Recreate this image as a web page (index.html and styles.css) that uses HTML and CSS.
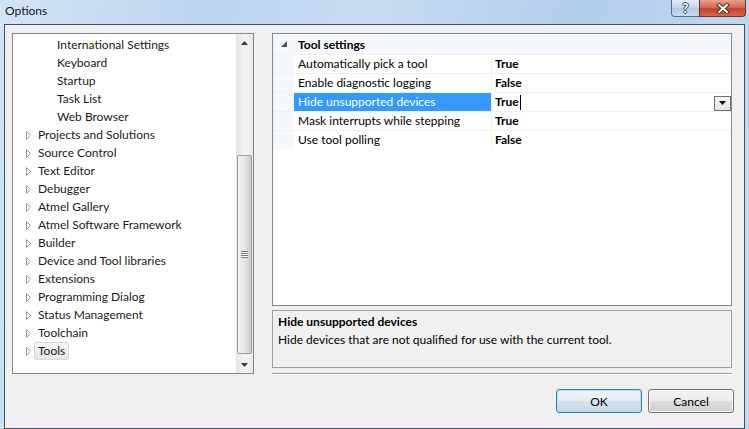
FILE: index.html
```html
<!DOCTYPE html>
<html lang="en">
<head>
    <meta charset="UTF-8" />
    <meta name="viewport" content="width=device-width, initial-scale=1" />
    <title>Options</title>
    <link rel="stylesheet" href="styles.css">
</head>
<body>
    <div class="window">
        <div class="titlebar">
            <span class="title">Options</span>
            <div class="caption-buttons">
                <span class="cap-btn help">?</span>
                <span class="cap-btn close">
                    <svg width="14" height="11" viewBox="0 0 14 11">
                        <path d="M3 2 L11 9 M11 2 L3 9" stroke="#4a2a24" stroke-width="4" stroke-linecap="square" />
                        <path d="M3 2 L11 9 M11 2 L3 9" stroke="#fff" stroke-width="2" stroke-linecap="square" />
                    </svg>
                </span>
            </div>
        </div>

        <div class="client">
            <div class="panes">
                <div class="tree">
                    <ul class="tree-list">
                        <li class="child"><span class="label">International Settings</span></li>
                        <li class="child"><span class="label">Keyboard</span></li>
                        <li class="child"><span class="label">Startup</span></li>
                        <li class="child"><span class="label">Task List</span></li>
                        <li class="child"><span class="label">Web Browser</span></li>
                        <li class="node"><svg class="expander" width="7" height="9" viewBox="0 0 7 9"><path d="M1.5 0.5 L5.5 4.5 L1.5 8.5 Z" /></svg><span class="label">Projects and Solutions</span></li>
                        <li class="node"><svg class="expander" width="7" height="9" viewBox="0 0 7 9"><path d="M1.5 0.5 L5.5 4.5 L1.5 8.5 Z" /></svg><span class="label">Source Control</span></li>
                        <li class="node"><svg class="expander" width="7" height="9" viewBox="0 0 7 9"><path d="M1.5 0.5 L5.5 4.5 L1.5 8.5 Z" /></svg><span class="label">Text Editor</span></li>
                        <li class="node"><svg class="expander" width="7" height="9" viewBox="0 0 7 9"><path d="M1.5 0.5 L5.5 4.5 L1.5 8.5 Z" /></svg><span class="label">Debugger</span></li>
                        <li class="node"><svg class="expander" width="7" height="9" viewBox="0 0 7 9"><path d="M1.5 0.5 L5.5 4.5 L1.5 8.5 Z" /></svg><span class="label">Atmel Gallery</span></li>
                        <li class="node"><svg class="expander" width="7" height="9" viewBox="0 0 7 9"><path d="M1.5 0.5 L5.5 4.5 L1.5 8.5 Z" /></svg><span class="label">Atmel Software Framework</span></li>
                        <li class="node"><svg class="expander" width="7" height="9" viewBox="0 0 7 9"><path d="M1.5 0.5 L5.5 4.5 L1.5 8.5 Z" /></svg><span class="label">Builder</span></li>
                        <li class="node"><svg class="expander" width="7" height="9" viewBox="0 0 7 9"><path d="M1.5 0.5 L5.5 4.5 L1.5 8.5 Z" /></svg><span class="label">Device and Tool libraries</span></li>
                        <li class="node"><svg class="expander" width="7" height="9" viewBox="0 0 7 9"><path d="M1.5 0.5 L5.5 4.5 L1.5 8.5 Z" /></svg><span class="label">Extensions</span></li>
                        <li class="node"><svg class="expander" width="7" height="9" viewBox="0 0 7 9"><path d="M1.5 0.5 L5.5 4.5 L1.5 8.5 Z" /></svg><span class="label">Programming Dialog</span></li>
                        <li class="node"><svg class="expander" width="7" height="9" viewBox="0 0 7 9"><path d="M1.5 0.5 L5.5 4.5 L1.5 8.5 Z" /></svg><span class="label">Status Management</span></li>
                        <li class="node"><svg class="expander" width="7" height="9" viewBox="0 0 7 9"><path d="M1.5 0.5 L5.5 4.5 L1.5 8.5 Z" /></svg><span class="label">Toolchain</span></li>
                        <li class="node"><svg class="expander" width="7" height="9" viewBox="0 0 7 9"><path d="M1.5 0.5 L5.5 4.5 L1.5 8.5 Z" /></svg><span class="label selected">Tools</span></li>
                    </ul>
                    <div class="scrollbar">
                        <div class="sb-arrow">
                            <svg width="7" height="4" viewBox="0 0 7 4"><path d="M3.5 0 L7 4 L0 4 Z" fill="#3a3a3a" /></svg>
                        </div>
                        <div class="sb-track">
                            <div class="sb-thumb"><span class="grip"></span></div>
                        </div>
                        <div class="sb-arrow">
                            <svg width="7" height="4" viewBox="0 0 7 4"><path d="M0 0 L7 0 L3.5 4 Z" fill="#3a3a3a" /></svg>
                        </div>
                    </div>
                </div>

                <div class="right">
                    <div class="propgrid">
                        <div class="category">
                            <span class="cat-glyph">
                                <svg width="6" height="6" viewBox="0 0 6 6"><path d="M6 0 L6 6 L0 6 Z" fill="#505050" /></svg>
                            </span>
                            <span class="cat-name">Tool settings</span>
                        </div>
                        <div class="prop">
                            <span class="prop-margin"></span>
                            <span class="prop-name">Automatically pick a tool</span>
                            <span class="prop-value">True</span>
                        </div>
                        <div class="prop">
                            <span class="prop-margin"></span>
                            <span class="prop-name">Enable diagnostic logging</span>
                            <span class="prop-value">False</span>
                        </div>
                        <div class="prop active">
                            <span class="prop-margin"></span>
                            <span class="prop-name">Hide unsupported devices</span>
                            <span class="prop-value">True<span class="caret"></span>
                                <span class="drop-btn">
                                    <svg width="7" height="4" viewBox="0 0 7 4"><path d="M0 0 L7 0 L3.5 4 Z" fill="#000" /></svg>
                                </span>
                            </span>
                        </div>
                        <div class="prop">
                            <span class="prop-margin"></span>
                            <span class="prop-name">Mask interrupts while stepping</span>
                            <span class="prop-value">True</span>
                        </div>
                        <div class="prop">
                            <span class="prop-margin"></span>
                            <span class="prop-name">Use tool polling</span>
                            <span class="prop-value">False</span>
                        </div>
                    </div>
                    <div class="description">
                        <div class="desc-title">Hide unsupported devices</div>
                        <div class="desc-text">Hide devices that are not qualified for use with the current tool.</div>
                    </div>
                    <div class="separator"></div>
                </div>
            </div>

            <div class="buttons">
                <button class="btn default">OK</button>
                <button class="btn">Cancel</button>
            </div>
        </div>
    </div>
</body>
</html>
```

FILE: styles.css
```css
* {
    box-sizing: border-box;
}
body {
    margin: 0;
    font-family: Lato, "Open Sans", sans-serif;
    font-size: 12px;
    color: #000;
}
.window {
    width: 749px;
    height: 429px;
    display: flex;
    flex-direction: column;
    overflow: hidden;
    background: linear-gradient(100deg, #d3e4f5 0%, #bcd5ef 25%, #c6dcf2 45%, #b4cfeb 70%, #c2d9f1 100%);
}
.titlebar {
    height: 24px;
    display: flex;
    align-items: flex-start;
}
.title {
    padding: 3px 0 0 5px;
    line-height: 16px;
    color: #101820;
}
.caption-buttons {
    margin-left: auto;
    margin-right: 3px;
    display: flex;
}
.cap-btn {
    height: 17px;
    display: flex;
    align-items: center;
    justify-content: center;
    border: 1px solid #5a6c84;
    border-top: none;
}
.help {
    width: 28px;
    border-right: none;
    border-radius: 0 0 0 4px;
    background: linear-gradient(#e1ebf6, #c5d6ea 50%, #b3c8e0 51%, #c9daed);
    color: #fff;
    font-weight: bold;
    font-size: 13px;
    text-shadow: 1px 0 #3b4a5e, -1px 0 #3b4a5e, 0 1px #3b4a5e, 0 -1px #3b4a5e;
}
.close {
    width: 47px;
    border-color: #6b3328;
    border-radius: 0 0 4px 0;
    background: linear-gradient(#e6a08f, #d66d57 45%, #c8432a 55%, #d8664d);
}
.client {
    flex: 1;
    margin: 0 4px;
    border: 1px solid #3e526b;
    background: #f0f0f0;
    padding: 8px 0 0 7px;
}
.panes {
    display: grid;
    grid-template-columns: 242px 460px;
    gap: 18px;
}

/* tree */
.tree {
    height: 341px;
    border: 1px solid #828790;
    background: #fff;
    display: flex;
}
.tree-list {
    flex: 1;
    list-style: none;
    margin: 0;
    padding: 2px 0 0;
    color: #1a1a1a;
}
.tree-list li {
    height: 18px;
    display: flex;
    align-items: center;
}
.tree-list .child {
    padding-left: 40px;
}
.tree-list .node {
    padding-left: 12px;
}
.expander {
    margin-right: 2px;
    fill: #fff;
    stroke: #9a9a9a;
    stroke-width: 1;
}
.label {
    border: 1px solid transparent;
    border-radius: 2px;
    padding: 0 3px;
    line-height: 16px;
}
.label.selected {
    border-color: #d9d9d9;
    background: linear-gradient(#f8f8f8, #e6e6e6);
}
.scrollbar {
    width: 17px;
    display: flex;
    flex-direction: column;
    background: linear-gradient(90deg, #e4e4e4, #f2f2f2 40%, #f2f2f2 70%, #e8e8e8);
}
.sb-arrow {
    height: 17px;
    display: flex;
    align-items: center;
    justify-content: center;
}
.sb-track {
    flex: 1;
    padding-top: 104px;
}
.sb-thumb {
    height: 199px;
    margin: 0 1px;
    border: 1px solid #9b9b9b;
    border-radius: 2px;
    background: linear-gradient(90deg, #f2f2f2, #e6e6e6 50%, #d6d6d6 80%, #cfcfcf);
    display: flex;
    align-items: center;
    justify-content: center;
}
.grip {
    width: 7px;
    height: 7px;
    border-top: 1px solid #7a7a7a;
    border-bottom: 1px solid #7a7a7a;
    background: linear-gradient(#fff 0, #fff 1px, #7a7a7a 1px, #7a7a7a 2px, #fff 2px, #fff 3px, #7a7a7a 3px, #7a7a7a 4px, #fff 4px);
}

/* property grid */
.right {
    display: flex;
    flex-direction: column;
}
.propgrid {
    height: 273px;
    border: 1px solid #828790;
    background: #fff;
}
.category {
    height: 20px;
    display: flex;
    align-items: center;
    background: #f5f8fc;
    font-weight: bold;
}
.cat-glyph {
    width: 24px;
    padding-left: 8px;
    display: flex;
}
.cat-name {
    padding-left: 1px;
}
.prop {
    height: 19px;
    display: flex;
    border-top: 1px solid #eef1f6;
    line-height: 18px;
}
.prop-margin {
    width: 21px;
    background: #f5f8fc;
}
.prop-name {
    width: 198px;
    padding-left: 4px;
    border-right: 1px solid #eef1f6;
}
.prop-value {
    flex: 1;
    padding-left: 3px;
    font-weight: bold;
    display: flex;
    align-items: center;
}
.active .prop-name {
    background: #3399ff;
    color: #fff;
}
.caret {
    width: 1px;
    height: 15px;
    background: #000;
    margin-left: 1px;
}
.drop-btn {
    margin-left: auto;
    width: 17px;
    height: 15px;
    margin-top: 2px;
    border: 1px solid #707070;
    background: linear-gradient(#f4f4f4, #e2e2e2);
    display: flex;
    align-items: center;
    justify-content: center;
}
.description {
    height: 58px;
    margin-top: 4px;
    border: 1px solid #a0a0a0;
    padding: 2px 5px;
    line-height: 18px;
}
.desc-title {
    font-weight: bold;
}
.separator {
    margin-top: 5px;
    border-top: 1px solid #a0a0a0;
    border-bottom: 1px solid #fff;
}

/* dialog buttons */
.buttons {
    width: 722px;
    margin-top: 14px;
    display: flex;
    justify-content: flex-end;
    gap: 6px;
}
.btn {
    width: 86px;
    height: 24px;
    font-family: inherit;
    font-size: 12px;
    color: #000;
    border: 1px solid #707070;
    border-radius: 3px;
    background: linear-gradient(#f2f2f2, #ebebeb 50%, #dddddd 51%, #cfcfcf);
    box-shadow: inset 0 0 0 1px #fbfbfb;
}
.btn.default {
    border-color: #3c7fb1;
    background: linear-gradient(#eef4f9, #e3ecf4 50%, #d5e2ee 51%, #cbd9e7);
    box-shadow: inset 0 0 0 1px #b6dcf3;
}
```
